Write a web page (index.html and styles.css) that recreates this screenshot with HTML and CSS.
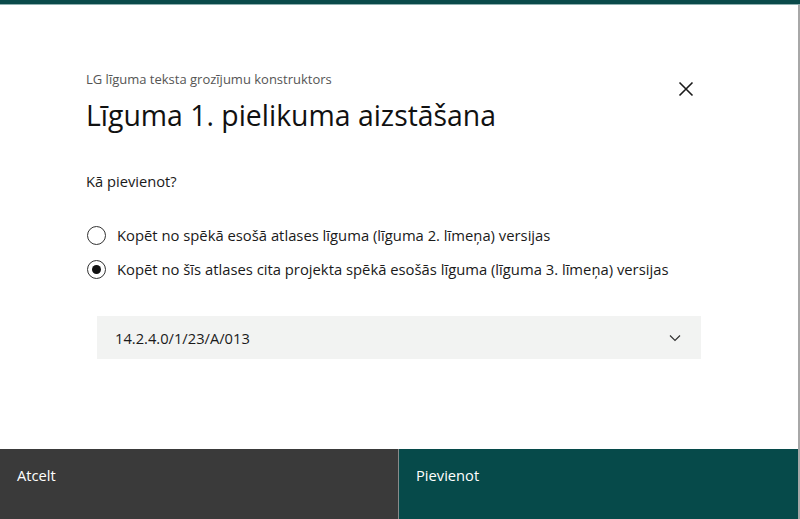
FILE: index.html
```html
<!DOCTYPE html>
<html lang="lv">
<head>
<meta charset="utf-8">
<title>Līguma 1. pielikuma aizstāšana</title>
<link rel="stylesheet" href="styles.css">
</head>
<body>
<div class="dialog">
  <div class="top-bar"></div>
  <div class="body">
    <div class="header">
      <div class="titles">
        <div class="subtitle">LG līguma teksta grozījumu konstruktors</div>
        <h1 class="title">Līguma 1. pielikuma aizstāšana</h1>
      </div>
      <button class="close" aria-label="Aizvērt">
        <svg width="16" height="16" viewBox="0 0 16 16"><path d="M1.5 1.5 L14.5 14.5 M14.5 1.5 L1.5 14.5" stroke="#1a1a1a" stroke-width="1.6" fill="none"/></svg>
      </button>
    </div>
    <div class="question">Kā pievienot?</div>
    <div class="options">
      <label class="option"><span class="radio"></span><span>Kopēt no spēkā esošā atlases līguma (līguma 2. līmeņa) versijas</span></label>
      <label class="option"><span class="radio checked"></span><span>Kopēt no šīs atlases cita projekta spēkā esošās līguma (līguma 3. līmeņa) versijas</span></label>
    </div>
    <div class="select">
      <span>14.2.4.0/1/23/A/013</span>
      <svg width="12" height="8" viewBox="0 0 12 8"><path d="M1 1.5 L6 6.5 L11 1.5" stroke="#333" stroke-width="1.2" fill="none"/></svg>
    </div>
  </div>
  <div class="footer">
    <button class="btn cancel">Atcelt</button>
    <button class="btn add">Pievienot</button>
  </div>
</div>
</body>
</html>
```
FILE: styles.css
```css
* { box-sizing: border-box; }
html, body { margin: 0; padding: 0; background: #fff; }
body { font-family: "Open Sans", "Noto Sans", sans-serif; color: #1a1a1a; }
.dialog {
  width: 800px;
  height: 519px;
  display: flex;
  flex-direction: column;
  border-right: 2px solid #a8a8a8;
}
.top-bar {
  height: 5px;
  background: #0a4a4a;
  border-bottom: 1px solid #8fb0b0;
  margin-right: -2px;
}
.body {
  flex: 1;
  padding: 65px 0 0 86px;
}
.header {
  display: flex;
  align-items: flex-start;
  justify-content: space-between;
  padding-right: 104px;
}
.subtitle {
  font-size: 13px;
  line-height: 18px;
  color: #555;
}
.title {
  margin: 8px 0 0;
  font-weight: 400;
  font-size: 28.4px;
  line-height: 38px;
  color: #111;
}
.close {
  border: 0;
  background: none;
  padding: 0;
  margin-top: 11px;
  width: 16px;
  height: 16px;
  cursor: pointer;
}
.close svg { display: block; }
.question {
  margin-top: 37px;
  font-size: 14.7px;
  line-height: 21px;
}
.options {
  margin-top: 33px;
  display: flex;
  flex-direction: column;
  gap: 13px;
}
.option {
  display: flex;
  align-items: center;
  gap: 11px;
  padding-left: 1px;
  font-size: 14.8px;
  line-height: 21px;
  color: #1a1a1a;
}
.radio {
  width: 19px;
  height: 19px;
  border: 1px solid #333;
  border-radius: 50%;
  display: flex;
  align-items: center;
  justify-content: center;
  flex: none;
}
.radio.checked::after {
  content: "";
  width: 9px;
  height: 9px;
  border-radius: 50%;
  background: #111;
}
.select {
  margin: 36px 0 0 11px;
  width: 604px;
  height: 43px;
  background: #f2f3f2;
  display: flex;
  align-items: center;
  justify-content: space-between;
  padding: 0 20px 0 18px;
  font-size: 14.7px;
}
.select svg { display: block; }
.footer {
  display: flex;
  height: 70px;
}
.btn {
  border: 0;
  font-family: inherit;
  font-size: 14.7px;
  color: #fff;
  text-align: left;
  padding: 16px 0 0 17px;
  display: flex;
  align-items: flex-start;
  cursor: pointer;
}
.cancel {
  width: 399px;
  background: #3a3a3a;
  border-right: 1px solid #8a8a8a;
}
.add {
  flex: 1;
  background: #064a4a;
  padding-left: 17px;
}
```
